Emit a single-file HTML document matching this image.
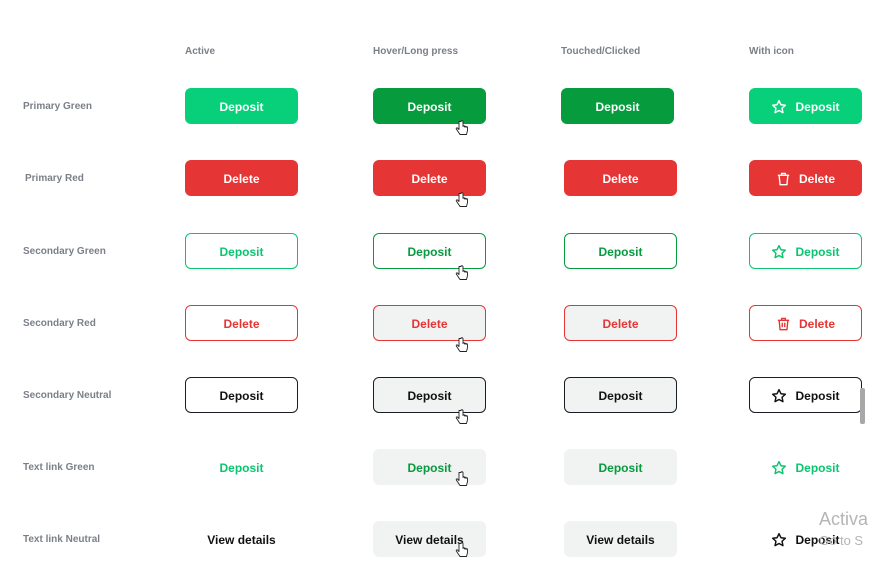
<!DOCTYPE html>
<html><head><meta charset="utf-8"><style>
*{margin:0;padding:0;box-sizing:border-box}
body{width:870px;height:562px;background:#fff;position:relative;overflow:hidden;font-family:"Liberation Sans",Arial,sans-serif}
.h{position:absolute;top:46px;font-size:10px;font-weight:bold;color:#7b8088}
.l{position:absolute;left:23px;font-size:10px;font-weight:bold;color:#7b8088}
.b{position:absolute;width:113px;height:36px;border-radius:6px;display:flex;align-items:center;justify-content:center;font-size:12px;font-weight:bold;gap:8px;padding-top:1px}
.pg{background:#08cf79;color:#fff}
.pgd{background:#069b3c;color:#fff}
.pr{background:#e53535;color:#fff}
.sg{border:1px solid #0bc46f;color:#0bc46f;background:#fff}
.sgd{border:1px solid #079a3e;color:#079a3e;background:#fff}
.sr{border:1px solid #e53535;color:#e53535;background:#fff}
.srd{border:1px solid #e53535;color:#e53535;background:#f1f2f2}
.sn{border:1px solid #1a1d24;color:#111;background:#fff}
.snd{border:1px solid #1a1d24;color:#111;background:#f1f2f2}
.tg{color:#0bc46f}
.tgd{color:#079a3e;background:#f1f2f2}
.tn{color:#111}
.tnd{color:#111;background:#f1f2f2}
.c{position:absolute;width:14px;height:16px}
svg{display:block}
</style></head><body>
<div class="h" style="left:185px">Active</div>
<div class="h" style="left:373px">Hover/Long press</div>
<div class="h" style="left:561px">Touched/Clicked</div>
<div class="h" style="left:749px">With icon</div>

<div class="l" style="top:101px">Primary Green</div>
<div class="l" style="top:173px;left:25px">Primary Red</div>
<div class="l" style="top:246px">Secondary Green</div>
<div class="l" style="top:318px">Secondary Red</div>
<div class="l" style="top:390px">Secondary Neutral</div>
<div class="l" style="top:462px">Text link Green</div>
<div class="l" style="top:534px">Text link Neutral</div>

<div class="b pg" style="left:185px;top:88px">Deposit</div>
<div class="b pgd" style="left:373px;top:88px">Deposit</div>
<div class="b pgd" style="left:561px;top:88px">Deposit</div>
<div class="b pg" style="left:749px;top:88px"><svg width="16" height="16" viewBox="0 0 24 24" fill="none" stroke="#fff" stroke-width="2.2" stroke-linejoin="round"><path d="M12 2.5l2.9 6.1 6.6.8-4.9 4.5 1.3 6.6L12 17.2l-5.9 3.3 1.3-6.6-4.9-4.5 6.6-.8z"/></svg>Deposit</div>

<div class="b pr" style="left:185px;top:160px">Delete</div>
<div class="b pr" style="left:373px;top:160px">Delete</div>
<div class="b pr" style="left:564px;top:160px">Delete</div>
<div class="b pr" style="left:749px;top:160px"><svg width="15" height="16" viewBox="0 0 24 24" fill="none" stroke="#fff" stroke-width="2.2" stroke-linejoin="round"><path d="M3 6h18M9 6V3h6v3M5 6l1.5 15h11L19 6"/></svg>Delete</div>

<div class="b sg" style="left:185px;top:233px">Deposit</div>
<div class="b sgd" style="left:373px;top:233px">Deposit</div>
<div class="b sgd" style="left:564px;top:233px">Deposit</div>
<div class="b sg" style="left:749px;top:233px"><svg width="16" height="16" viewBox="0 0 24 24" fill="none" stroke="#0bc46f" stroke-width="2.2" stroke-linejoin="round"><path d="M12 2.5l2.9 6.1 6.6.8-4.9 4.5 1.3 6.6L12 17.2l-5.9 3.3 1.3-6.6-4.9-4.5 6.6-.8z"/></svg>Deposit</div>

<div class="b sr" style="left:185px;top:305px">Delete</div>
<div class="b srd" style="left:373px;top:305px">Delete</div>
<div class="b srd" style="left:564px;top:305px">Delete</div>
<div class="b sr" style="left:749px;top:305px"><svg width="15" height="16" viewBox="0 0 24 24" fill="none" stroke="#e53535" stroke-width="2.2" stroke-linejoin="round"><path d="M3 6h18M9 6V3h6v3M5 6l1.5 15h11L19 6M10 10v7M14 10v7"/></svg>Delete</div>

<div class="b sn" style="left:185px;top:377px">Deposit</div>
<div class="b snd" style="left:373px;top:377px">Deposit</div>
<div class="b snd" style="left:564px;top:377px">Deposit</div>
<div class="b sn" style="left:749px;top:377px"><svg width="16" height="16" viewBox="0 0 24 24" fill="none" stroke="#111" stroke-width="2.2" stroke-linejoin="round"><path d="M12 2.5l2.9 6.1 6.6.8-4.9 4.5 1.3 6.6L12 17.2l-5.9 3.3 1.3-6.6-4.9-4.5 6.6-.8z"/></svg>Deposit</div>

<div class="b tg" style="left:185px;top:449px">Deposit</div>
<div class="b tgd" style="left:373px;top:449px">Deposit</div>
<div class="b tgd" style="left:564px;top:449px">Deposit</div>
<div class="b tg" style="left:749px;top:449px"><svg width="16" height="16" viewBox="0 0 24 24" fill="none" stroke="#0bc46f" stroke-width="2.2" stroke-linejoin="round"><path d="M12 2.5l2.9 6.1 6.6.8-4.9 4.5 1.3 6.6L12 17.2l-5.9 3.3 1.3-6.6-4.9-4.5 6.6-.8z"/></svg>Deposit</div>

<div class="b tn" style="left:185px;top:521px">View details</div>
<div class="b tnd" style="left:373px;top:521px">View details</div>
<div class="b tnd" style="left:564px;top:521px">View details</div>
<div class="b tn" style="left:749px;top:521px"><svg width="16" height="16" viewBox="0 0 24 24" fill="none" stroke="#111" stroke-width="2.2" stroke-linejoin="round"><path d="M12 2.5l2.9 6.1 6.6.8-4.9 4.5 1.3 6.6L12 17.2l-5.9 3.3 1.3-6.6-4.9-4.5 6.6-.8z"/></svg>Deposit</div>

<svg class="c" style="left:455px;top:120px" viewBox="0 0 14 16"><path d="M4 1.5v8L2.5 8C1.5 7.5.8 8.5 1.5 9.3L5 14.5h6.5l1-4V7.5c0-1-1.5-1-1.5 0V7c0-1-1.5-1-1.5 0v-.5c0-1-1.5-1-1.5 0V1.5c0-1-2-1-2 0z" fill="#fff" stroke="#222" stroke-width=".9" stroke-linejoin="round"/></svg>
<svg class="c" style="left:455px;top:192px" viewBox="0 0 14 16"><path d="M4 1.5v8L2.5 8C1.5 7.5.8 8.5 1.5 9.3L5 14.5h6.5l1-4V7.5c0-1-1.5-1-1.5 0V7c0-1-1.5-1-1.5 0v-.5c0-1-1.5-1-1.5 0V1.5c0-1-2-1-2 0z" fill="#fff" stroke="#222" stroke-width=".9" stroke-linejoin="round"/></svg>
<svg class="c" style="left:455px;top:265px" viewBox="0 0 14 16"><path d="M4 1.5v8L2.5 8C1.5 7.5.8 8.5 1.5 9.3L5 14.5h6.5l1-4V7.5c0-1-1.5-1-1.5 0V7c0-1-1.5-1-1.5 0v-.5c0-1-1.5-1-1.5 0V1.5c0-1-2-1-2 0z" fill="#fff" stroke="#222" stroke-width=".9" stroke-linejoin="round"/></svg>
<svg class="c" style="left:455px;top:337px" viewBox="0 0 14 16"><path d="M4 1.5v8L2.5 8C1.5 7.5.8 8.5 1.5 9.3L5 14.5h6.5l1-4V7.5c0-1-1.5-1-1.5 0V7c0-1-1.5-1-1.5 0v-.5c0-1-1.5-1-1.5 0V1.5c0-1-2-1-2 0z" fill="#fff" stroke="#222" stroke-width=".9" stroke-linejoin="round"/></svg>
<svg class="c" style="left:455px;top:409px" viewBox="0 0 14 16"><path d="M4 1.5v8L2.5 8C1.5 7.5.8 8.5 1.5 9.3L5 14.5h6.5l1-4V7.5c0-1-1.5-1-1.5 0V7c0-1-1.5-1-1.5 0v-.5c0-1-1.5-1-1.5 0V1.5c0-1-2-1-2 0z" fill="#fff" stroke="#222" stroke-width=".9" stroke-linejoin="round"/></svg>
<svg class="c" style="left:455px;top:471px" viewBox="0 0 14 16"><path d="M4 1.5v8L2.5 8C1.5 7.5.8 8.5 1.5 9.3L5 14.5h6.5l1-4V7.5c0-1-1.5-1-1.5 0V7c0-1-1.5-1-1.5 0v-.5c0-1-1.5-1-1.5 0V1.5c0-1-2-1-2 0z" fill="#fff" stroke="#222" stroke-width=".9" stroke-linejoin="round"/></svg>
<svg class="c" style="left:455px;top:542px" viewBox="0 0 14 16"><path d="M4 1.5v8L2.5 8C1.5 7.5.8 8.5 1.5 9.3L5 14.5h6.5l1-4V7.5c0-1-1.5-1-1.5 0V7c0-1-1.5-1-1.5 0v-.5c0-1-1.5-1-1.5 0V1.5c0-1-2-1-2 0z" fill="#fff" stroke="#222" stroke-width=".9" stroke-linejoin="round"/></svg>

<div style="position:absolute;left:860px;top:388px;width:5px;height:36px;background:#a8a8a8;border-radius:2px"></div>
<div style="position:absolute;left:819px;top:509px;font-size:18px;color:#b5b5b5">Activa</div>
<div style="position:absolute;left:819px;top:533px;font-size:13px;color:#b5b5b5">Go to S</div>
</body></html>
